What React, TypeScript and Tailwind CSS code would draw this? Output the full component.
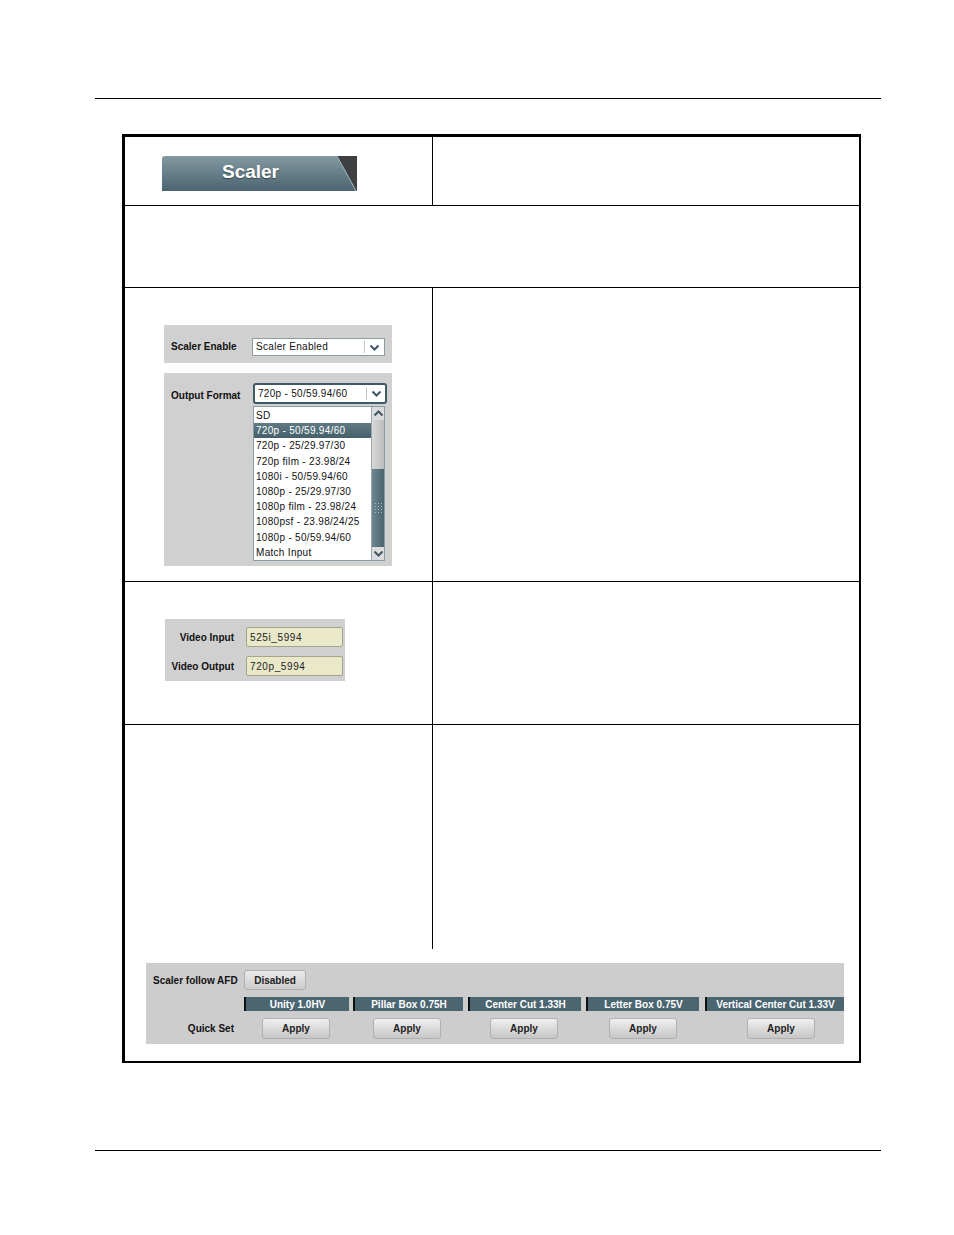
import React from "react";

const font = "font-['Liberation_Sans',Arial,sans-serif]";

const Chevron = ({ down = true }: { down?: boolean }) => (
  <svg width="11" height="7" viewBox="0 0 11 7" fill="none">
    <polyline
      points={down ? "1.5,1.5 5.5,5.5 9.5,1.5" : "1.5,5.5 5.5,1.5 9.5,5.5"}
      stroke="#3e5866"
      strokeWidth="2"
    />
  </svg>
);

const formats = [
  "SD",
  "720p - 50/59.94/60",
  "720p - 25/29.97/30",
  "720p film - 23.98/24",
  "1080i - 50/59.94/60",
  "1080p - 25/29.97/30",
  "1080p film - 23.98/24",
  "1080psf - 23.98/24/25",
  "1080p - 50/59.94/60",
  "Match Input",
];

const presets = [
  { name: "Unity 1.0HV", ml: "ml-0", w: "w-[105px]", bl: "ml-[18px]" },
  { name: "Pillar Box 0.75H", ml: "ml-[4px]", w: "w-[110px]", bl: "ml-[20px]" },
  { name: "Center Cut 1.33H", ml: "ml-[5px]", w: "w-[113px]", bl: "ml-[22px]" },
  { name: "Letter Box 0.75V", ml: "ml-[5px]", w: "w-[113px]", bl: "ml-[23px]" },
  { name: "Vertical Center Cut 1.33V", ml: "ml-[6px]", w: "w-[139px]", bl: "ml-[42px]" },
];

const Field = ({ label, value }: { label: string; value: string }) => (
  <div className="flex items-center h-[20px]">
    <span className="w-[69px] text-right text-[10px] font-bold text-[#111]">{label}</span>
    <div className="ml-[12px] w-[97px] h-[20px] bg-[#e9e8c9] border border-[#a6a58c] rounded-[2px] flex items-center pl-[3px] text-[10px] text-[#222] tracking-[0.6px]">
      {value}
    </div>
  </div>
);

export default function App() {
  return (
    <div className={`${font} bg-white w-[954px] h-[1235px] flex flex-col`}>
      <div className="mt-[98px] ml-[95px] w-[786px] h-px bg-black" />

      <div className="mt-[35px] ml-[122px] w-[739px] h-[929px] border-l-[3px] border-t-[3px] border-r-[2px] border-b-[2px] border-black flex flex-col">
        {/* row 1 */}
        <div className="flex h-[69px] border-b border-black">
          <div className="w-[308px] border-r border-black pl-[37px] pt-[19px]">
            <div className="relative w-[195px] h-[35px] rounded-tl-[3px] bg-gradient-to-b from-[#849aa2] via-[#667e88] to-[#4d6570] flex items-center justify-center pr-[18px] pb-[2px] overflow-hidden">
              <span className="text-white font-bold text-[19px] [text-shadow:0_1px_1px_rgba(0,0,0,0.4)]">
                Scaler
              </span>
              <svg className="absolute right-0 top-0" width="20" height="35" viewBox="0 0 20 35">
                <polygon points="0,0 20,0 20,35" fill="#3d3f40" />
                <line x1="0" y1="0" x2="19" y2="35" stroke="#9fb2b8" strokeWidth="1" />
              </svg>
            </div>
          </div>
          <div className="flex-1" />
        </div>

        {/* row 2 */}
        <div className="h-[82px] border-b border-black" />

        {/* row 3 */}
        <div className="flex h-[294px] border-b border-black">
          <div className="w-[308px] border-r border-black pl-[39px] pt-[37px]">
            <div className="w-[228px] h-[38px] bg-[#d0d0d0] flex items-start pt-[13px] pl-[7px]">
              <span className="w-[81px] text-[10px] leading-[18px] font-bold text-[#111]">Scaler Enable</span>
              <div className="w-[133px] h-[18px] bg-white border border-[#8d9ca2] flex">
                <span className="flex-1 pl-[3px] text-[10px] leading-[16px] text-[#111] tracking-[0.3px]">Scaler Enabled</span>
                <div className="w-[20px] border-l border-[#c6c6c6] my-[2px] flex items-center justify-center">
                  <Chevron />
                </div>
              </div>
            </div>

            <div className="mt-[10px] w-[228px] h-[193px] bg-[#d0d0d0] pl-[7px] pt-[10px] flex">
              <span className="w-[82px] text-[10px] font-bold text-[#111] mt-[5px]">Output Format</span>
              <div className="flex flex-col">
                <div className="w-[134px] h-[21px] bg-white border-2 border-[#3e5a66] rounded-[3px] flex">
                  <span className="flex-1 pl-[3px] text-[10px] leading-[17px] text-[#111] tracking-[0.3px]">720p - 50/59.94/60</span>
                  <div className="w-[19px] border-l border-[#c6c6c6] my-[2px] flex items-center justify-center">
                    <Chevron />
                  </div>
                </div>
                <div className="mt-[2px] w-[132px] h-[155px] bg-white border border-[#8d9ca2] flex">
                  <div className="flex-1 flex flex-col pt-[1px]">
                    {formats.map((f, i) => (
                      <div
                        key={f}
                        className={`h-[15.3px] pl-[2px] text-[10px] leading-[15px] tracking-[0.3px] whitespace-nowrap ${
                          i === 1
                            ? "bg-gradient-to-b from-[#5f7a84] to-[#46606a] text-white"
                            : "text-[#111]"
                        }`}
                      >
                        {f}
                      </div>
                    ))}
                  </div>
                  <div className="w-[13px] flex flex-col bg-[#c9c9c9] border-l border-[#9aa6aa]">
                    <div className="h-[13px] flex items-center justify-center bg-[#dcdcdc]">
                      <Chevron down={false} />
                    </div>
                    <div className="h-[49px] bg-gradient-to-r from-[#d8d8d8] to-[#bdbdbd]" />
                    <div className="flex-1 bg-gradient-to-r from-[#6d8892] to-[#4a646e] flex items-center justify-center">
                      <div className="grid grid-cols-3 gap-[2px]">
                        {Array.from({ length: 12 }).map((_, i) => (
                          <div key={i} className="w-[1px] h-[1px] bg-[#a9bcc2]" />
                        ))}
                      </div>
                    </div>
                    <div className="h-[13px] flex items-center justify-center bg-[#dcdcdc]">
                      <Chevron />
                    </div>
                  </div>
                </div>
              </div>
            </div>
          </div>
          <div className="flex-1" />
        </div>

        {/* row 4 */}
        <div className="flex h-[143px] border-b border-black">
          <div className="w-[308px] border-r border-black pl-[40px] pt-[37px]">
            <div className="w-[180px] h-[62px] bg-[#d0d0d0] flex flex-col gap-[9px] pt-[8px]">
              <Field label="Video Input" value="525i_5994" />
              <Field label="Video Output" value="720p_5994" />
            </div>
          </div>
          <div className="flex-1" />
        </div>

        {/* row 5 */}
        <div className="flex-1 flex flex-col">
          <div className="flex h-[224px]">
            <div className="w-[308px] border-r border-black" />
            <div className="flex-1" />
          </div>
          <div className="mt-[14px] ml-[21px] w-[698px] h-[81px] bg-[#cdcdcd] flex flex-col pt-[7px]">
            <div className="flex items-center h-[20px]">
              <span className="w-[98px] pl-[7px] text-[10px] font-bold text-[#111] whitespace-nowrap">
                Scaler follow AFD
              </span>
              <div className="w-[62px] h-[20px] rounded-[3px] border border-[#b0b0b0] bg-gradient-to-b from-[#ececec] to-[#cbcbcb] flex items-center justify-center text-[10px] font-bold text-[#222]">
                Disabled
              </div>
            </div>
            <div className="flex mt-[7px]">
              <div className="w-[98px] flex flex-col">
                <div className="h-[14px]" />
                <div className="mt-[7px] h-[21px] flex items-center justify-end pr-[10px] text-[10px] font-bold text-[#111]">
                  Quick Set
                </div>
              </div>
              {presets.map((p) => (
                <div key={p.name} className={`${p.ml} ${p.w} flex flex-col`}>
                  <div className="h-[14px] bg-[#4b6571] border-l-2 border-[#111] flex items-center justify-center text-[10px] font-bold text-white whitespace-nowrap overflow-hidden">
                    {p.name}
                  </div>
                  <div
                    className={`${p.bl} mt-[7px] w-[68px] h-[21px] rounded-[3px] border border-[#b0b0b0] bg-gradient-to-b from-[#f0f0f0] to-[#c6c6c6] flex items-center justify-center text-[10px] font-bold text-[#222]`}
                  >
                    Apply
                  </div>
                </div>
              ))}
            </div>
          </div>
        </div>
      </div>

      <div className="mt-[87px] ml-[95px] w-[786px] h-px bg-black" />
    </div>
  );
}
